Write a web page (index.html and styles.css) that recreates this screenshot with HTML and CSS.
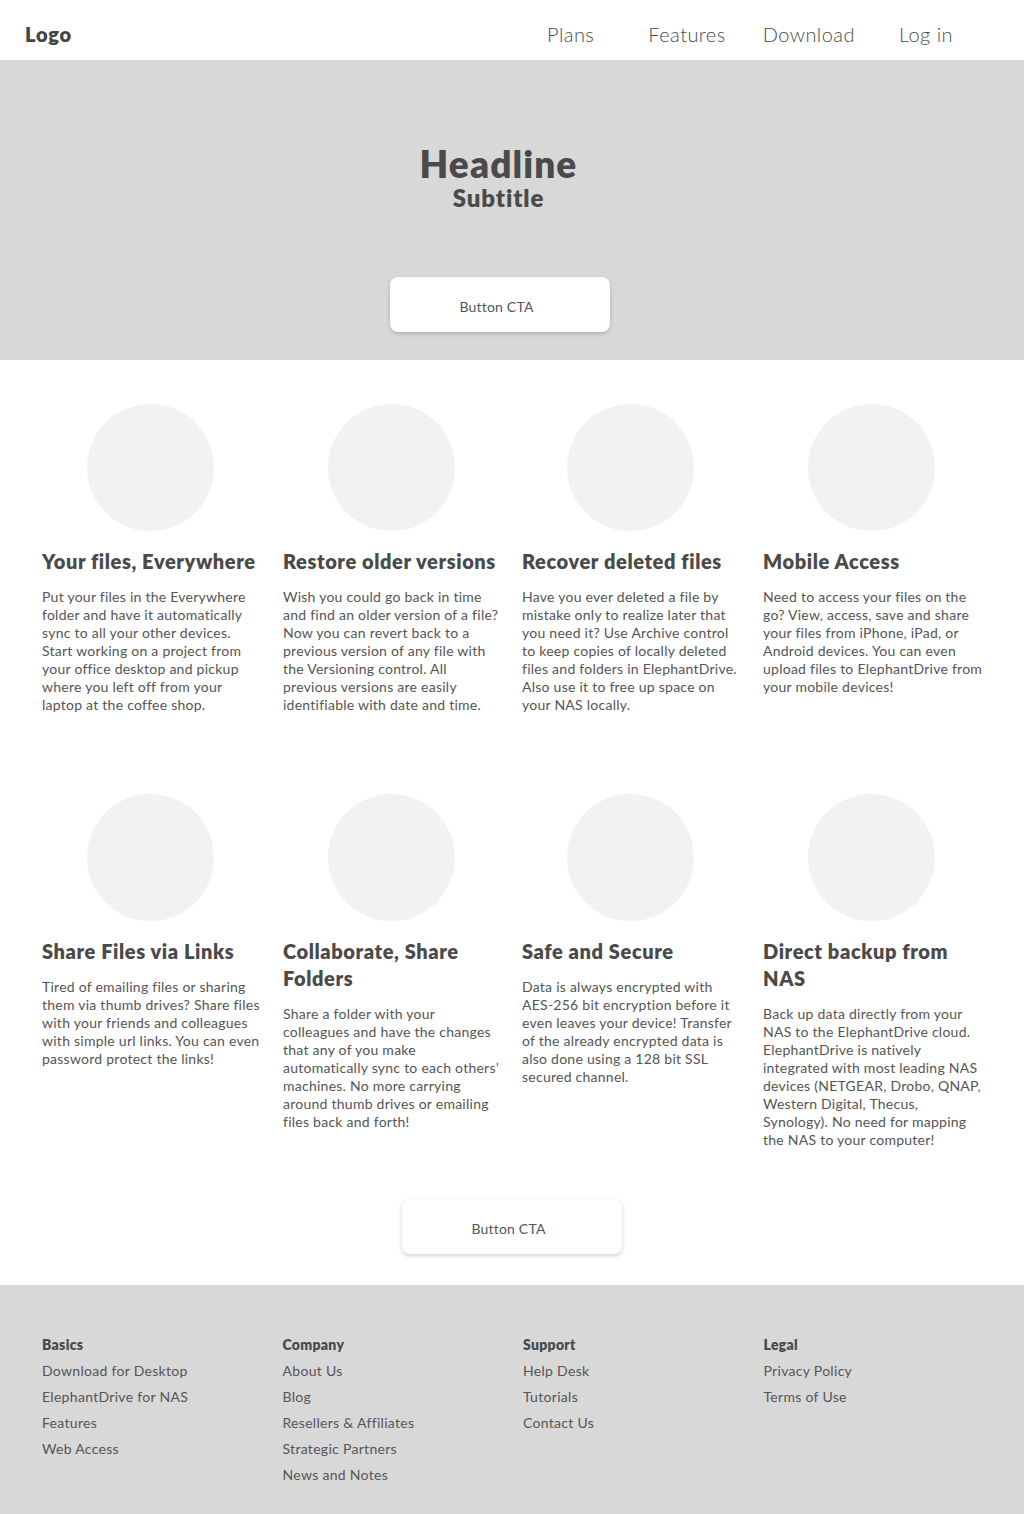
FILE: index.html
```html
<!DOCTYPE html>
<html lang="en">
<head>
<meta charset="utf-8">
<title>ElephantDrive</title>
<link rel="stylesheet" href="styles.css">
</head>
<body>
<header class="nav">
  <div class="logo">Logo</div>
  <nav class="menu">
    <a class="menu-item mi-plans">Plans</a>
    <a class="menu-item mi-features">Features</a>
    <a class="menu-item mi-download">Download</a>
    <a class="menu-item mi-login">Log in</a>
  </nav>
</header>

<section class="hero">
  <h1 class="headline">Headline</h1>
  <h2 class="subtitle">Subtitle</h2>
  <button class="cta hero-cta">Button CTA</button>
</section>

<section class="feature-area">
  <div class="grid">
    <div class="card">
      <div class="circle"></div>
      <h3>Your files, Everywhere</h3>
      <p>Put your files in the Everywhere folder and have it automatically sync to all your other devices. Start working on a project from your office desktop and pickup where you left off from your laptop at the coffee shop.</p>
    </div>
    <div class="card">
      <div class="circle"></div>
      <h3>Restore older versions</h3>
      <p>Wish you could go back in time and find an older version of a file? Now you can revert back to a previous version of any file with the Versioning control. All previous versions are easily identifiable with date and time.</p>
    </div>
    <div class="card">
      <div class="circle"></div>
      <h3>Recover deleted files</h3>
      <p>Have you ever deleted a file by mistake only to realize later that you need it? Use Archive control to keep copies of locally deleted files and folders in ElephantDrive. Also use it to free up space on your NAS locally.</p>
    </div>
    <div class="card">
      <div class="circle"></div>
      <h3>Mobile Access</h3>
      <p>Need to access your files on the go? View, access, save and share your files from iPhone, iPad, or Android devices. You can even upload files to ElephantDrive from your mobile devices!</p>
    </div>
    <div class="card">
      <div class="circle"></div>
      <h3>Share Files via Links</h3>
      <p>Tired of emailing files or sharing them via thumb drives? Share files with your friends and colleagues with simple url links. You can even password protect the links!</p>
    </div>
    <div class="card">
      <div class="circle"></div>
      <h3>Collaborate, Share Folders</h3>
      <p>Share a folder with your colleagues and have the changes that any of you make automatically sync to each others’ machines. No more carrying around thumb drives or emailing files back and forth!</p>
    </div>
    <div class="card">
      <div class="circle"></div>
      <h3>Safe and Secure</h3>
      <p>Data is always encrypted with AES-256 bit encryption before it even leaves your device! Transfer of the already encrypted data is also done using a 128 bit SSL secured channel.</p>
    </div>
    <div class="card">
      <div class="circle"></div>
      <h3>Direct backup from NAS</h3>
      <p>Back up data directly from your NAS to the ElephantDrive cloud. ElephantDrive is natively integrated with most leading NAS devices (NETGEAR, Drobo, QNAP, Western Digital, Thecus, Synology). No need for mapping the NAS to your computer!</p>
    </div>
  </div>
  <div class="cta-row">
    <button class="cta">Button CTA</button>
  </div>
</section>

<footer class="footer">
  <div class="fcol">
    <h4>Basics</h4>
    <a>Download for Desktop</a>
    <a>ElephantDrive for NAS</a>
    <a>Features</a>
    <a>Web Access</a>
  </div>
  <div class="fcol">
    <h4>Company</h4>
    <a>About Us</a>
    <a>Blog</a>
    <a>Resellers &amp; Affiliates</a>
    <a>Strategic Partners</a>
    <a>News and Notes</a>
  </div>
  <div class="fcol">
    <h4>Support</h4>
    <a>Help Desk</a>
    <a>Tutorials</a>
    <a>Contact Us</a>
  </div>
  <div class="fcol">
    <h4>Legal</h4>
    <a>Privacy Policy</a>
    <a>Terms of Use</a>
  </div>
</footer>
</body>
</html>
```

FILE: styles.css
```css
* { box-sizing: border-box; }
html, body { margin: 0; padding: 0; }
body {
  font-family: Lato, "Noto Sans", "Liberation Sans", sans-serif;
  color: #4a4a4a;
  background: #fff;
  width: 1024px;
}

.nav {
  height: 60px;
  display: flex;
  align-items: center;
  padding: 0 0 0 25px;
  background: #fff;
}
.logo {
  font-weight: 800;
  font-size: 20px;
  letter-spacing: 0.8px;
  color: #444;
  margin-top: 7px;
}
.menu {
  display: flex;
  align-items: center;
  margin-left: auto;
  padding-right: 71px;
  margin-top: 7px;
}
.menu-item {
  font-size: 20px;
  font-weight: 300;
  letter-spacing: 0.45px;
  color: #4a4a4a;
  text-decoration: none;
}
.menu .mi-features { margin-left: 54px; }
.menu .mi-download { margin-left: 37px; }
.menu .mi-login { margin-left: 44px; }

.hero {
  background: #d8d8d8;
  height: 300px;
  display: flex;
  flex-direction: column;
  align-items: center;
  padding-top: 82px;
}
.headline {
  margin: 0 0 0 -27px;
  font-size: 37px;
  line-height: 44px;
  font-weight: 800;
  letter-spacing: 1.1px;
  color: #4a4a4a;
}
.subtitle {
  margin: -3px 0 0 -27px;
  font-size: 24px;
  line-height: 30px;
  font-weight: 800;
  letter-spacing: 0.9px;
  color: #4a4a4a;
}
.cta {
  flex-shrink: 0;
  width: 220px;
  height: 55px;
  border: none;
  background: #fff;
  border-radius: 8px;
  box-shadow: 0 2px 4px rgba(0,0,0,0.18);
  font-family: inherit;
  font-size: 14px;
  letter-spacing: 0.2px;
  color: #555;
  padding: 4px 7px 0 0;
}
.hero-cta {
  margin: 64px 0 0 -24px;
}

.feature-area {
  padding: 44px 42px 31px;
}
.grid {
  display: grid;
  grid-template-columns: 220px 218px 220px 223px;
  column-gap: 21px;
  grid-template-rows: 390px auto;
}
.card {
  display: flex;
  flex-direction: column;
}
.circle {
  width: 127px;
  height: 127px;
  border-radius: 50%;
  background: #f2f2f2;
  margin-left: 45px;
}
.card h3 {
  margin: 17px 0 0;
  font-size: 20px;
  line-height: 27px;
  font-weight: 800;
  letter-spacing: 0.6px;
  color: #4a4a4a;
}
.card p {
  margin: 13px 0 0;
  font-size: 14px;
  line-height: 18px;
  letter-spacing: 0.25px;
  color: #555;
}
.cta-row {
  display: flex;
  justify-content: center;
  margin-top: 50px;
}

.footer {
  background: #d8d8d8;
  display: grid;
  grid-template-columns: repeat(4, 240.5px);
  padding: 51px 42px 30px;
  min-height: 229px;
}
.fcol {
  display: flex;
  flex-direction: column;
}
.fcol h4 {
  margin: 0 0 4px;
  font-size: 14px;
  line-height: 18px;
  font-weight: 800;
  letter-spacing: 0.3px;
  color: #4a4a4a;
}
.fcol a {
  font-size: 14px;
  line-height: 26px;
  letter-spacing: 0.3px;
  color: #555;
}
```
